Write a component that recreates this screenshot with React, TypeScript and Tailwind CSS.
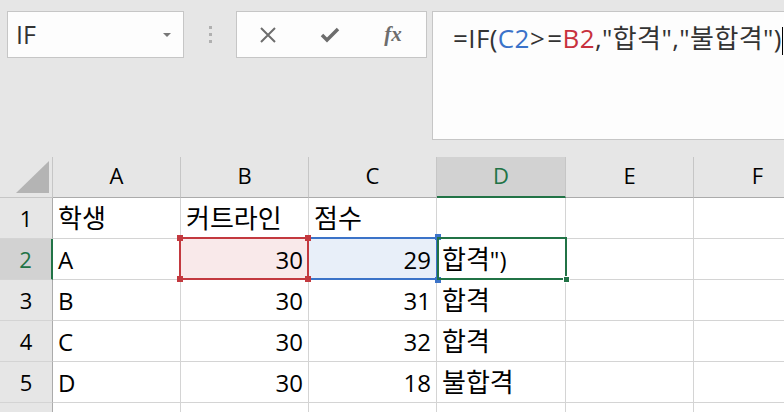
import React from 'react';

type Cell = { text?: string; align?: 'left' | 'right'; bg?: string };

const cols = ['A', 'B', 'C', 'D', 'E', 'F'];

const rows: Cell[][] = [
    [{ text: '학생' }, { text: '커트라인' }, { text: '점수' }, {}, {}, {}],
    [{ text: 'A' }, { text: '30', align: 'right', bg: 'bg-[#f9e9ea]' }, { text: '29', align: 'right', bg: 'bg-[#e8eff9]' }, { text: '합격")' }, {}, {}],
    [{ text: 'B' }, { text: '30', align: 'right' }, { text: '31', align: 'right' }, { text: '합격' }, {}, {}],
    [{ text: 'C' }, { text: '30', align: 'right' }, { text: '32', align: 'right' }, { text: '합격' }, {}, {}],
    [{ text: 'D' }, { text: '30', align: 'right' }, { text: '18', align: 'right' }, { text: '불합격' }, {}, {}],
    [{}, {}, {}, {}, {}, {}],
];

// hangul is drawn a bit larger than latin in the sheet font
const renderText = (text?: string) => {
    if (!text) return null;
    return text.split(/([가-힣]+)/).filter(Boolean).map((part, i) =>
        /[가-힣]/.test(part)
            ? <span key={i} className="text-[26px]">{part}</span>
            : <span key={i}>{part}</span>
    );
};

const Handle = ({ className }: { className: string }) => (
    <div className={`absolute w-[6px] h-[6px] ${className}`} />
);

export default function App() {
    return (
        <div className="w-[784px] h-[412px] overflow-hidden bg-[#e6e6e6] font-['Open_Sans','Noto_Sans_CJK_KR',sans-serif]">
            {/* toolbar */}
            <div className="h-[157px] flex items-start pt-[11px] pl-[7px]">
                <div className="w-[177px] h-[47px] bg-[#fdfdfd] border border-[#c6c6c6] flex items-center pl-[8px] pr-[12px]">
                    <span className="text-[25px] text-[#333] flex-1 leading-none">IF</span>
                    <div className="w-0 h-0 border-l-[4px] border-r-[4px] border-t-[4px] border-l-transparent border-r-transparent border-t-[#777]" />
                </div>
                <div className="w-[52px] h-[47px] flex flex-col items-center justify-center gap-[4px]">
                    <div className="w-[3px] h-[3px] bg-[#b0b0b0]" />
                    <div className="w-[3px] h-[3px] bg-[#b0b0b0]" />
                    <div className="w-[3px] h-[3px] bg-[#b0b0b0]" />
                </div>
                <div className="w-[191px] h-[47px] bg-[#fdfdfd] border border-[#c6c6c6] flex items-center text-[#6d6d6d]">
                    <div className="w-[61px] flex justify-center">
                        <svg width="20" height="20" viewBox="0 0 20 20">
                            <path d="M3 3 L17 17 M17 3 L3 17" stroke="#6d6d6d" strokeWidth="2" fill="none" />
                        </svg>
                    </div>
                    <div className="w-[64px] flex justify-center">
                        <svg width="20" height="18" viewBox="0 0 20 18">
                            <path d="M2 9 L7 14 L18 3" stroke="#6d6d6d" strokeWidth="3.5" fill="none" />
                        </svg>
                    </div>
                    <div className="w-[62px] flex justify-center">
                        <span className="font-['Liberation_Serif',serif] italic font-bold text-[21px] leading-none">fx</span>
                    </div>
                </div>
                <div className="ml-[5px] flex-1 h-[129px] bg-[#fdfdfd] border border-r-0 border-[#c6c6c6] pl-[20px] pt-[10px] text-[26px] tracking-[0.4px] leading-[32px] text-[#333] whitespace-nowrap overflow-hidden">
                    =IF(<span className="text-[#3a72c9]">C2</span>&gt;<span className="ml-[2px]">=</span><span className="text-[#c8313d]">B2</span>,"합격","불합격")<span className="inline-block w-[1px] h-[28px] bg-black align-middle" />
                </div>
            </div>

            {/* sheet */}
            <div className="relative">
                <div className="grid grid-cols-[53px_128px_128px_128px_129px_128px_128px] grid-rows-[41px_41px_41px_41px_41px_41px_41px]">
                    <div className="border-r border-b border-[#c6c6c6] relative">
                        <div className="absolute left-[16px] top-[4px] w-0 h-0 border-l-[33px] border-b-[32px] border-l-transparent border-b-[#b4b4b4]" />
                    </div>
                    {cols.map(c => (
                        <div
                            key={c}
                            className={`flex items-center justify-center text-[22px] pb-[3px] border-r border-[#c6c6c6] ${c === 'D' ? 'bg-[#d2d2d2] text-[#217346] border-b-2 border-b-[#217346]' : 'text-black border-b border-b-[#ababab]'}`}
                        >
                            {c}
                        </div>
                    ))}
                    {rows.map((row, r) => (
                        <React.Fragment key={r}>
                            <div
                                className={`flex items-center justify-center text-[22px] border-b border-[#d4d4d4] ${r === 1 ? 'bg-[#d2d2d2] text-[#217346] border-r-2 border-r-[#217346]' : 'bg-[#e6e6e6] text-black border-r border-r-[#ababab]'}`}
                            >
                                {r < 5 ? r + 1 : ''}
                            </div>
                            {row.map((cell, i) => (
                                <div
                                    key={i}
                                    className={`flex items-center px-[5px] pt-[1px] text-[24px] text-black whitespace-nowrap border-r border-b border-[#d4d4d4] ${cell.bg ?? 'bg-white'} ${cell.align === 'right' ? 'justify-end' : 'justify-start'}`}
                                >
                                    {renderText(cell.text)}
                                </div>
                            ))}
                        </React.Fragment>
                    ))}
                </div>

                {/* C2 reference (blue) */}
                <div className="absolute left-[307px] top-[80px] w-[131px] h-[43px] border-2 border-[#3b73c8]">
                    <Handle className="bg-[#3b73c8] -right-[5px] -top-[5px]" />
                    <Handle className="bg-[#3b73c8] -right-[5px] -bottom-[5px]" />
                </div>
                {/* B2 reference (red) */}
                <div className="absolute left-[179px] top-[80px] w-[130px] h-[43px] border-2 border-[#c3393f]">
                    <Handle className="bg-[#c3393f] -left-[4px] -top-[4px]" />
                    <Handle className="bg-[#c3393f] -right-[4px] -top-[4px]" />
                    <Handle className="bg-[#c3393f] -left-[4px] -bottom-[4px]" />
                    <Handle className="bg-[#c3393f] -right-[4px] -bottom-[4px]" />
                </div>
                {/* active cell D2 */}
                <div className="absolute left-[437px] top-[80px] w-[130px] h-[43px] border-2 border-[#217346]">
                    <div className="absolute -right-[5px] -bottom-[5px] w-[7px] h-[7px] bg-[#217346] border border-white" />
                </div>
            </div>
        </div>
    );
}
